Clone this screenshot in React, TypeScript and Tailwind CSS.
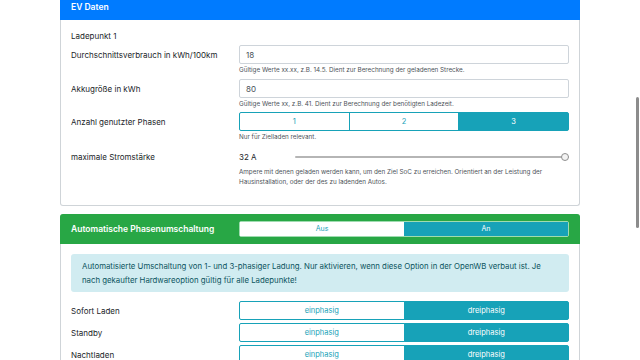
import React from "react";

const inputCls =
  "flex h-[19px] w-full items-center rounded-[2px] border border-[#ced4da] bg-white px-[6px] text-[8px] text-[#495057]";

function SegButtons({ options, active }: { options: string[]; active: number }) {
  return (
    <div className="flex h-[19px] w-full">
      {options.map((o, i) => (
        <div
          key={o}
          className={`flex flex-1 items-center justify-center border border-[#17a2b8] text-[7.5px] ${
            i === active ? "bg-[#17a2b8] text-white" : "bg-white text-[#17a2b8]"
          } ${i === 0 ? "rounded-l-[2px]" : "-ml-px"} ${
            i === options.length - 1 ? "rounded-r-[2px]" : ""
          }`}
        >
          {o}
        </div>
      ))}
    </div>
  );
}

function Row({
  label,
  children,
  help,
  className = "",
}: {
  label: string;
  children: React.ReactNode;
  help?: React.ReactNode;
  className?: string;
}) {
  return (
    <div className={`grid grid-cols-[168px_1fr] ${className}`}>
      <div className="flex h-[19px] items-center text-[8px] text-[#212529]">{label}</div>
      <div>
        {children}
        {help && (
          <div className="mt-[1px] text-[6.3px] leading-[10px] text-[#4d5359]">{help}</div>
        )}
      </div>
    </div>
  );
}

export default function App() {
  return (
    <div
      className="relative h-[360px] w-[640px] overflow-hidden bg-white"
      style={{ fontFamily: "Inter, 'Liberation Sans', sans-serif" }}
    >
      <div className="ml-[60px] w-[520px]">
        {/* EV Daten */}
        <div className="h-[206px] rounded-b-[3px] border border-t-0 border-[#cfd4d8]">
          <div className="-mx-px flex h-[20px] items-center bg-[#007bff] px-[11px] pb-[5px] text-[8.5px] font-semibold text-white">
            EV Daten
          </div>
          <div className="flex flex-col px-[10px] pt-[9px]">
            <div className="flex h-[14px] items-center text-[8px] text-[#212529]">Ladepunkt 1</div>
            <Row
              className="mt-[2px]"
              label="Durchschnittsverbrauch in kWh/100km"
              help="Gültige Werte xx.xx, z.B. 14.5. Dient zur Berechnung der geladenen Strecke."
            >
              <div className={inputCls}>18</div>
            </Row>
            <Row
              className="mt-[4px]"
              label="Akkugröße in kWh"
              help="Gültige Werte xx, z.B. 41. Dient zur Berechnung der benötigten Ladezeit."
            >
              <div className={inputCls}>80</div>
            </Row>
            <Row className="mt-[3px]" label="Anzahl genutzter Phasen" help="Nur für Zielladen relevant.">
              <SegButtons options={["1", "2", "3"]} active={2} />
            </Row>
            <Row
              className="mt-[5px]"
              label="maximale Stromstärke"
              help={
                <>
                  Ampere mit denen geladen werden kann, um den Ziel SoC zu erreichen. Orientiert an der Leistung der
                  <br />
                  Hausinstallation, oder der des zu ladenden Autos.
                </>
              }
            >
              <div className="flex h-[19px] items-center">
                <div className="w-[56px] text-[8px] text-[#212529]">32 A</div>
                <div className="relative flex h-[8px] flex-1 items-center">
                  <div className="h-[2px] w-full rounded bg-[#b5b5b5]" />
                  <div className="absolute right-0 h-[8px] w-[8px] rounded-full border border-[#8f8f8f] bg-[#f3f3f3]" />
                </div>
              </div>
            </Row>
          </div>
        </div>

        {/* Automatische Phasenumschaltung */}
        <div className="mt-[8px] rounded-[3px] border border-[#cfd4d8]">
          <div className="-mx-px -mt-px flex h-[30px] items-center rounded-t-[3px] bg-[#28a745] px-[11px]">
            <div className="w-[168px] text-[8.5px] font-semibold text-white">Automatische Phasenumschaltung</div>
            <div className="flex h-[16px] flex-1 rounded-[2px] border border-[#9fdcb0]">
              <div className="flex flex-1 items-center justify-center bg-white text-[7px] text-[#17a2b8]">Aus</div>
              <div className="flex flex-1 items-center justify-center bg-[#17a2b8] text-[7px] text-white">An</div>
            </div>
          </div>
          <div className="px-[10px] pt-[10px]">
            <div className="rounded-[3px] bg-[#d1ecf1] px-[11px] py-[5px] text-[7.8px] leading-[14px] text-[#0c5460]">
              Automatisierte Umschaltung von 1- und 3-phasiger Ladung. Nur aktivieren, wenn diese Option in der OpenWB verbaut ist. Je
              <br />
              nach gekaufter Hardwareoption gültig für alle Ladepunkte!
            </div>
            <div className="mt-[9px] flex flex-col gap-[3px] pb-[10px]">
              {["Sofort Laden", "Standby", "Nachtladen"].map((l) => (
                <div key={l} className="grid grid-cols-[168px_1fr]">
                  <div className="flex h-[19px] items-center text-[8px] text-[#212529]">{l}</div>
                  <SegButtons options={["einphasig", "dreiphasig"]} active={1} />
                </div>
              ))}
            </div>
          </div>
        </div>
      </div>

      {/* overlay scrollbar */}
      <div className="absolute left-[636px] top-[97px] h-[131px] w-[2.5px] rounded-full bg-[#8c8c8c]" />
    </div>
  );
}
